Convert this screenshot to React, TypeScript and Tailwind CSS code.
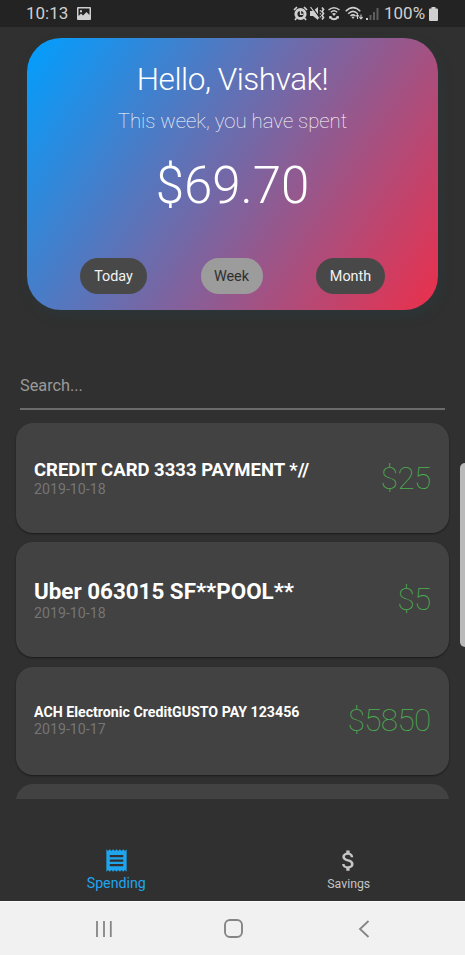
import { useState } from "react";
import { MdAttachMoney, MdReceipt } from "react-icons/md";

interface Transaction {
  name: string;
  date: string;
  amount: string;
  nameClass: string;
  cardClass: string;
}

const TRANSACTIONS: Transaction[] = [
  {
    name: "CREDIT CARD 3333 PAYMENT *//",
    date: "2019-10-18",
    amount: "$25",
    nameClass: "text-[18.5px] leading-[22px]",
    cardClass: "h-[110px]",
  },
  {
    name: "Uber 063015 SF**POOL**",
    date: "2019-10-18",
    amount: "$5",
    nameClass: "text-[22.4px] leading-[27px]",
    cardClass: "h-[115px]",
  },
  {
    name: "ACH Electronic CreditGUSTO PAY 123456",
    date: "2019-10-17",
    amount: "$5850",
    nameClass: "text-[14.2px] leading-[17px]",
    cardClass: "h-[108px]",
  },
];

const PERIODS = [
  { label: "Today", width: "w-[67px]" },
  { label: "Week", width: "w-[62px]" },
  { label: "Month", width: "w-[69px]" },
];

function StatusBar() {
  return (
    <header className="flex h-[27px] shrink-0 items-center bg-[#232323] pl-[26px] text-[#cfcfcf]">
      <span className="w-[51px] text-[17px] leading-[27px]">10:13</span>
      <svg width="14" height="13" viewBox="0 0 14 13">
        <path
          fillRule="evenodd"
          fill="currentColor"
          d="M1 0h12a1 1 0 0 1 1 1v11a1 1 0 0 1-1 1H1a1 1 0 0 1-1-1V1a1 1 0 0 1 1-1zM1.5 1.5V9L4 6.5l2 2L9.5 5l3 3V1.5zM3 3.2h2v2H3z"
        />
      </svg>
      <div className="ml-[202px] flex items-center">
        {/* alarm */}
        <svg width="15" height="15" viewBox="0 0 15 15" fill="none" stroke="currentColor">
          <circle cx="7.5" cy="8" r="4.6" strokeWidth="3" />
          <path d="M7.500 5v3.300h2.700" strokeWidth="1.300" />
          <path d="M1 4 4 1M14 4l-3-3M3.500 12 2 14M11.500 12l1.500 2" strokeWidth="1.700" />
        </svg>
        {/* muted, vibrating */}
        <svg className="ml-[2px]" width="15" height="15" viewBox="0 0 15 15">
          <path d="M0 5h3l5-4v13l-5-4H0z" fill="currentColor" />
          <path d="m1.500 .5 8 11" stroke="#232323" strokeWidth="1.300" />
          <path d="m.5 1 8.500 11.500" stroke="currentColor" strokeWidth="1.200" />
          <path
            d="m12 1.500 1.500 2-1.500 2 1.500 2-1.500 2 1.500 2-1.500 2"
            fill="none"
            stroke="currentColor"
            strokeWidth="1.700"
          />
          <path d="M10.300 4v1.500M10.300 7v1.500M10.300 10v1.500" stroke="currentColor" strokeWidth="1" />
        </svg>
        {/* wi-fi calling */}
        <svg className="ml-[2px]" width="14" height="15" viewBox="0 0 14 15" fill="none" stroke="currentColor" strokeWidth="1.400">
          <path d="M1.500 4q5.500-4.700 11 0M3.800 6.300q3.200-3 6.400 0" />
          <path d="M5 7.800q2-1.500 4 0L7 10z" fill="currentColor" stroke="none" />
          <path d="M3 11q4 4.500 8 0" strokeWidth="1.900" />
          <path d="M2.500 12.500v-2h2M11.500 12.500v-2h-2" strokeWidth="1" />
        </svg>
        {/* wi-fi with traffic arrows */}
        <svg className="ml-[4px]" width="18" height="15" viewBox="0 0 18 15" fill="none" stroke="currentColor" strokeWidth="1.500">
          <path d="M.7 5.300q7.300-7.300 14.600 0M3.200 7.700q4.800-4.600 9.600 0M5.500 10q2.500-2.300 5 0" />
          <path d="M6.500 11q1.500-1.200 3 0L8 13z" fill="currentColor" stroke="none" />
          <path d="M12.500 13V8.500m-1.600 2 1.600-1.800 1.600 1.800M16 8.500V13m-1.600-2 1.600 1.800 1.600-1.800" strokeWidth="1.100" />
        </svg>
        {/* signal strength */}
        <svg className="ml-[3px]" width="13" height="15" viewBox="0 0 13 15" fill="currentColor">
          <path d="M0 12h2v2H0z" />
          <path d="M3.500 9h2v5h-2zM7 6h2v8H7zM10.500 2h2v12h-2z" opacity=".35" />
        </svg>
        <span className="ml-[5px] w-[45px] text-[17px] leading-[27px]">100%</span>
        <svg width="9" height="14" viewBox="0 0 9 14" fill="currentColor">
          <path d="M2.500 0h4v1.500h1.500a1 1 0 0 1 1 1V13a1 1 0 0 1-1 1H1a1 1 0 0 1-1-1V2.500a1 1 0 0 1 1-1h1.500z" />
        </svg>
      </div>
    </header>
  );
}

function SummaryCard() {
  const [period, setPeriod] = useState("Week");

  return (
    <section className="mx-[27px] mt-[11px] flex h-[272px] shrink-0 flex-col items-center rounded-[34px] bg-[linear-gradient(123.5deg,#009fff,#ec2f4b)] pt-[23px] text-white shadow-[3px_6px_12px_rgba(38,66,72,0.3)]">
      <h1 className="text-[31.5px] leading-[37px] font-light tracking-[-0.45px]">Hello, Vishvak!</h1>
      <p className="mt-[11px] text-[20.4px] leading-[24px] font-thin">
        This week, you have spent
      </p>
      <p className="mt-[23px] text-[51px] leading-[60px] font-light">$69.70</p>
      <div className="mt-[41.5px] flex w-[305px] justify-between">
        {PERIODS.map(({ label, width }) => (
          <button
            key={label}
            onClick={() => setPeriod(label)}
            className={`h-[36px] rounded-full pt-[2px] text-[14.4px] ${width} ${
              period === label
                ? "bg-[#9c9c9c] text-[#2f2f2f]"
                : "bg-[#484848] text-[#f2f2f2]"
            }`}
          >
            {label}
          </button>
        ))}
      </div>
    </section>
  );
}

function TransactionCard({ name, date, amount, nameClass, cardClass }: Transaction) {
  return (
    <li
      className={`flex shrink-0 items-center justify-between rounded-[17px] bg-[#424242] px-[18px] shadow-[0_1px_2px_rgba(0,0,0,0.45)] ${cardClass}`}
    >
      <div>
        <h2 className={`font-bold text-white ${nameClass}`}>{name}</h2>
        <p className="text-[14.2px] leading-[17px] text-[#757575]">{date}</p>
      </div>
      <span className="mr-[0.5px] text-[31.5px] leading-[37px] font-thin tracking-[-0.7px] text-[#4caf50]">
        {amount}
      </span>
    </li>
  );
}

function TabBar() {
  return (
    <nav className="flex h-[63px] shrink-0">
      <button className="flex w-1/2 flex-col items-center pt-[9px] text-[#1ea5ee]">
        <MdReceipt size={27} />
        <span className="mt-px text-[14.2px] leading-[17px]">Spending</span>
      </button>
      <button className="flex w-1/2 flex-col items-center pt-[9px] text-[#c5c5c5]">
        <MdAttachMoney size={27} />
        <span className="mt-[3px] text-[12.3px] leading-[15px]">Savings</span>
      </button>
    </nav>
  );
}

function SystemNav() {
  return (
    <footer className="flex h-[54px] shrink-0 items-center border-t border-[#fafafa] bg-[#f1f1f1] pl-[95px] text-[#858585]">
      <svg width="18" height="18" viewBox="0 0 18 18" stroke="currentColor" strokeWidth="1.800">
        <path d="M2 1v16M9 1v16M15.800 1v16" />
      </svg>
      <svg className="ml-[111px]" width="19" height="19" viewBox="0 0 19 19" fill="none" stroke="currentColor" strokeWidth="1.900">
        <rect x="1" y="1" width="17" height="17" rx="5" />
      </svg>
      <svg className="ml-[115px]" width="12" height="18" viewBox="0 0 12 18" fill="none" stroke="currentColor" strokeWidth="1.800">
        <path d="M10.500 1 2 9l8.500 8" />
      </svg>
    </footer>
  );
}

export default function App() {
  return (
    <div className="relative flex h-[955px] w-[465px] flex-col overflow-hidden bg-[#303030] font-['Roboto',sans-serif]">
      <StatusBar />
      <SummaryCard />
      <div className="mx-[20px] mt-[58px] flex h-[42px] shrink-0 items-start border-b-2 border-[#6b6b6b] pt-[8px]">
        <input
          type="text"
          placeholder="Search..."
          className="w-full bg-transparent text-[16.3px] leading-[20px] text-white outline-none placeholder:text-[#9a9a9a]"
        />
      </div>
      <ul className="mt-[13px] flex h-[376px] shrink-0 flex-col gap-[9.25px] overflow-hidden px-[16px]">
        {TRANSACTIONS.map((item) => (
          <TransactionCard key={item.name} {...item} />
        ))}
        <li className="h-[110px] shrink-0 rounded-[17px] bg-[#424242]" />
      </ul>
      <div className="grow" />
      <TabBar />
      <SystemNav />
      {/* edge panel handle */}
      <div className="absolute top-[463px] right-0 h-[184px] w-[5px] rounded-l-[5px] bg-[#b9b9b9]" />
    </div>
  );
}
